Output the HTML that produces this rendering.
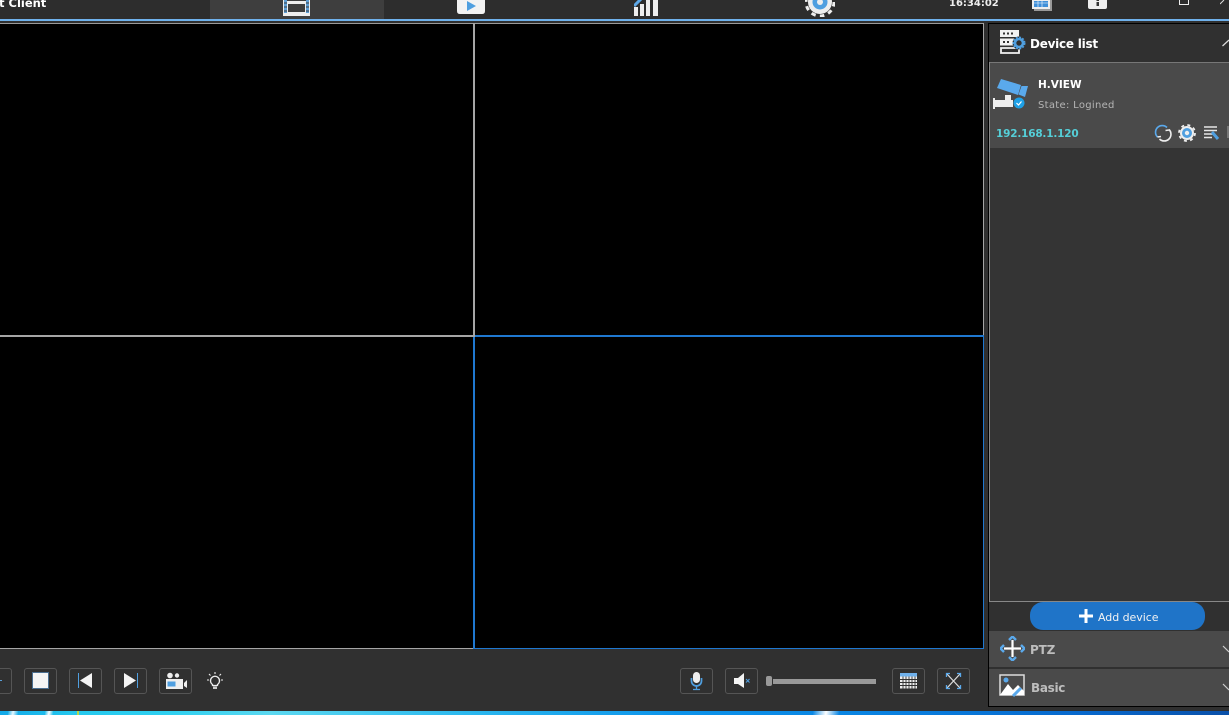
<!DOCTYPE html>
<html><head><meta charset="utf-8">
<style>
html,body{margin:0;padding:0;background:#303030}
#r{position:relative;width:1229px;height:715px;overflow:hidden;background:#303030;font-family:"DejaVu Sans","Liberation Sans",sans-serif}
#r div,#r svg,#r span{position:absolute}
.t{white-space:nowrap;line-height:1}
.b{width:31px;height:24px;top:668px;border:1px solid #555;border-radius:3px}
</style></head><body><div id="r">
<div style="left:0;top:0;width:1229px;height:19px;background:#2d2d2d"></div>
<div style="left:210px;top:0;width:174px;height:19px;background:#3e3e3e"></div>
<div style="left:0;top:19px;width:1229px;height:2px;background:#6fb1ec"></div>
<div class="t" style="left:-1px;top:-4px;font:bold 11.5px 'DejaVu Sans',sans-serif;color:#fff;">t Client</div>
<div class="t" style="left:949px;top:-2px;font:bold 10px 'DejaVu Sans',sans-serif;color:#eee">16:34:02</div>

<svg style="left:283px;top:0" width="27" height="17"><rect x="0" y="0" width="27" height="16" fill="#eee"/><rect x="1" y="0" width="3" height="13" fill="#5d9fd6"/><rect x="23" y="0" width="3" height="13" fill="#5d9fd6"/><path d="M1 3H4M1 7H4M1 11H4M23 3H26M23 7H26M23 11H26" stroke="#3e3e3e" stroke-width="1"/><rect x="4" y="0" width="19" height="1" fill="#3e3e3e"/><rect x="5" y="4" width="17" height="8" fill="#3e3e3e"/></svg>
<svg style="left:457px;top:0" width="28" height="15"><path d="M0 0H28V11Q28 14 25 14H3Q0 14 0 11Z" fill="#f3f3f3"/><path d="M10 1L19 6L10 11Z" fill="#4f9fe0"/></svg>
<svg style="left:634px;top:0" width="26" height="17"><rect x="0" y="7" width="4" height="9" fill="#eee"/><rect x="6" y="4" width="4" height="12" fill="#eee"/><rect x="12" y="0" width="4" height="16" fill="#eee"/><rect x="19" y="0" width="5" height="16" fill="#eee"/><path d="M0 6L8 -2" stroke="#5da8e8" stroke-width="3"/></svg>
<svg style="left:805px;top:0" width="30" height="17"><circle cx="15" cy="2" r="12" fill="#eee"/><circle cx="15" cy="2" r="14" fill="none" stroke="#eee" stroke-width="3" stroke-dasharray="4.500 4.300"/><circle cx="15" cy="2" r="7.500" fill="#4f9fe0"/><circle cx="15" cy="2" r="3" fill="#eee"/></svg>
<svg style="left:1031px;top:0" width="22" height="12"><rect x="3" y="0" width="18" height="11" fill="#999"/><rect x="1" y="0" width="18" height="9" fill="#eee"/><rect x="3" y="1" width="14" height="6" fill="#3f8fd8"/><path d="M7 1V7M11 1V7M3 3H17" stroke="#fff" stroke-width=".6"/></svg>
<svg style="left:1088px;top:0" width="19" height="10"><path d="M0 0H19V7Q19 9 17 9H2Q0 9 0 7Z" fill="#eee"/><rect x="8.500" y="0" width="2.500" height="1" fill="#333"/><rect x="8.500" y="2" width="2.500" height="4" fill="#333"/></svg>
<div style="left:1179px;top:-6px;width:8px;height:9px;border:1px solid #eee"></div>
<svg style="left:1220px;top:0" width="9" height="5"><path d="M0 4L4 0" stroke="#ddd" stroke-width="1"/></svg>

<div style="left:0;top:23px;width:984px;height:626px;background:#000"></div>
<div style="left:0;top:23px;width:984px;height:1px;background:#9a9a9a"></div>
<div style="left:473px;top:23px;width:2px;height:313px;background:#a5a5a5"></div>
<div style="left:0;top:335px;width:475px;height:2px;background:#a5a5a5"></div>
<div style="left:983px;top:23px;width:1px;height:312px;background:#a5a5a5"></div>
<div style="left:0;top:648px;width:473px;height:1px;background:#a5a5a5"></div>
<div style="left:473px;top:337px;width:2px;height:312px;background:#1f78d0"></div>
<div style="left:475px;top:335px;width:509px;height:2px;background:#1f78d0"></div>
<div style="left:983px;top:335px;width:1px;height:314px;background:#1f78d0"></div>
<div style="left:473px;top:648px;width:511px;height:1px;background:#1f78d0"></div>

<div style="left:988px;top:23px;width:241px;height:684px;background:#000"></div>
<div style="left:989px;top:24px;width:240px;height:682px;background:#303030"></div>
<div style="left:989px;top:62px;width:240px;height:1px;background:#777"></div>
<div style="left:989px;top:62px;width:1px;height:540px;background:#888"></div>
<div style="left:990px;top:63px;width:239px;height:85px;background:#4a4a4a"></div>
<div style="left:990px;top:148px;width:239px;height:453px;background:#343434"></div>
<div style="left:989px;top:601px;width:240px;height:1px;background:#888"></div>

<svg style="left:999px;top:29px" width="28" height="26"><rect x="1" y="1" width="19" height="7" fill="#f2f2f2"/><rect x="1" y="9.500" width="19" height="7" fill="#f2f2f2"/><path d="M4 4.500h2M8 4.500h2M12 4.500h2M4 13h2M8 13h2" stroke="#333" stroke-width="2"/><path d="M2 19H20V24H2Z" fill="none" stroke="#f2f2f2" stroke-width="1.800"/><circle cx="20" cy="14" r="6.500" fill="#303030"/><circle cx="20" cy="14" r="4" fill="#303030" stroke="#4f9fe0" stroke-width="2.600"/><circle cx="20" cy="14" r="5.800" fill="none" stroke="#4f9fe0" stroke-width="1.400" stroke-dasharray="2 1.400"/></svg>
<div class="t" style="left:1030px;top:37px;font:bold 12px 'DejaVu Sans',sans-serif;color:#fff;letter-spacing:-.25px">Device list</div>
<svg style="left:1222px;top:38px" width="7" height="10"><path d="M0.500 8L7 2" stroke="#ddd" stroke-width="1.200" fill="none"/></svg>

<svg style="left:992px;top:78px" width="40" height="36"><path d="M5 10L9 1L29 7L26 17Z" fill="#5aa9ec"/><path d="M29.500 8L36 8L33 19L26.500 16.500Z" fill="#5aa9ec"/><rect x="1" y="20" width="2" height="11" fill="#eee"/><rect x="1" y="22" width="20" height="7" fill="#eee"/><rect x="13" y="17" width="6" height="6" fill="#eee"/><circle cx="27" cy="25" r="5.500" fill="#1ea0e6"/><path d="M24.500 25L26.500 27L29.500 23.500" stroke="#fff" stroke-width="1.200" fill="none"/></svg>
<div class="t" style="left:1038px;top:79px;font:bold 10.5px 'DejaVu Sans',sans-serif;color:#fff">H.VIEW</div>
<div class="t" style="left:1038px;top:100px;font:10px 'DejaVu Sans',sans-serif;color:#b5b5b5;letter-spacing:.3px">State: Logined</div>
<div class="t" style="left:996px;top:128px;font:bold 10.5px 'DejaVu Sans',sans-serif;color:#55cfd8;letter-spacing:-.2px">192.168.1.120</div>
<svg style="left:1154px;top:124px" width="18" height="18"><path d="M3.500 13A6.500 6.500 0 0 1 13 3.500" stroke="#5aa9ec" stroke-width="1.600" fill="none"/><path d="M15 5.500A6.500 6.500 0 0 1 5.500 15" stroke="#eee" stroke-width="1.600" fill="none"/><path d="M15 6L11.500 6.500M3.500 13L7 12.500" stroke="#eee" stroke-width="1.500"/></svg>
<svg style="left:1178px;top:124px" width="18" height="18"><circle cx="9" cy="9" r="7" fill="#eee"/><circle cx="9" cy="9" r="8" fill="none" stroke="#eee" stroke-width="1.800" stroke-dasharray="3 3.300"/><circle cx="9" cy="9" r="5" fill="#4f9fe0"/><circle cx="9" cy="9" r="2.200" fill="#eee"/></svg>
<svg style="left:1203px;top:125px" width="18" height="16"><path d="M1 2H14M1 5.500H14M1 9H10M1 12.500H9" stroke="#e6e6e6" stroke-width="1.500"/><path d="M9 7L15 14" stroke="#4f9fe0" stroke-width="3"/></svg>
<div style="left:1227px;top:126px;width:2px;height:12px;background:#777"></div>

<div style="left:1030px;top:602px;width:175px;height:28px;border-radius:13px;background:#1f74c8"></div>
<svg style="left:1079px;top:609px" width="14" height="14"><path d="M7 0V14M0 7H14" stroke="#fff" stroke-width="3"/></svg>
<div class="t" style="left:1098px;top:611px;font:11px 'DejaVu Sans',sans-serif;color:#f2f2f2;letter-spacing:-.05px">Add device</div>

<div style="left:989px;top:631px;width:240px;height:36px;background:#4a4a4a"></div>
<div style="left:989px;top:669px;width:240px;height:37px;background:#4a4a4a"></div>
<svg style="left:1000px;top:636px" width="25" height="25"><path d="M12.500 4V21M4 12.500H21" stroke="#fff" stroke-width="2.200"/><path d="M9 4L12.500 .5L16 4M9 21L12.500 24.500L16 21M4 9L.5 12.500L4 16M21 9L24.500 12.500L21 16" stroke="#5aa9ec" stroke-width="2.400" fill="none"/></svg>
<div class="t" style="left:1030px;top:643px;font:bold 12px 'DejaVu Sans',sans-serif;color:#bdbdbd;letter-spacing:-.2px">PTZ</div>
<svg style="left:999px;top:674px" width="27" height="24"><rect x="1" y="1" width="24" height="20" fill="none" stroke="#ddd" stroke-width="1.500"/><path d="M1 21L9 10L14 16L19 11L25 17V21Z" fill="#fff"/><circle cx="7" cy="6" r="2.500" fill="#5aa9ec"/><path d="M14 22L22 14" stroke="#5aa9ec" stroke-width="3"/></svg>
<div class="t" style="left:1031px;top:681px;font:bold 12px 'DejaVu Sans',sans-serif;color:#bdbdbd;letter-spacing:-.3px">Basic</div>
<svg style="left:1222px;top:644px" width="7" height="10"><path d="M1 2L7 8" stroke="#ccc" stroke-width="1.200"/></svg>
<svg style="left:1222px;top:682px" width="7" height="10"><path d="M1 2L7 8" stroke="#ccc" stroke-width="1.200"/></svg>

<div class="b" style="left:-21px"></div>
<div style="left:0;top:680px;width:2px;height:1px;background:#5a9fd8"></div>
<div class="b" style="left:24px"></div>
<div style="left:32px;top:672px;width:15px;height:15px;background:#f4f4f4;border:1px solid #4a6e90"></div>
<div class="b" style="left:69px"></div>
<svg style="left:69px;top:668px" width="33" height="26"><rect x="9" y="5" width="1" height="15" fill="#4f9fe0"/><path d="M23 5V20L11 12.500Z" fill="#f4f4f4"/></svg>
<div class="b" style="left:114px"></div>
<svg style="left:114px;top:668px" width="33" height="26"><rect x="23" y="5" width="1" height="15" fill="#4f9fe0"/><path d="M10 5V20L22 12.500Z" fill="#f4f4f4"/></svg>
<div class="b" style="left:159px"></div>
<svg style="left:159px;top:668px" width="33" height="26"><circle cx="11" cy="7.500" r="2.800" fill="#eee"/><circle cx="18" cy="7.500" r="2.200" fill="#eee"/><rect x="7" y="11" width="17" height="10" fill="#eee"/><rect x="8.500" y="13.500" width="8" height="5" fill="#4f9fe0"/><path d="M25 15L28 12V20L25 18Z" fill="#eee"/></svg>
<svg style="left:206px;top:672px" width="18" height="18"><path d="M6.500 12.500A4.500 4.500 0 1 1 11.500 12.500V13.500H6.500Z" fill="none" stroke="#eee" stroke-width="1.300"/><rect x="7" y="14.500" width="4" height="2.500" fill="#ccc"/><path d="M9 0V2M3 2L4.500 3.500M15 2L13.500 3.500M1 8H3M15 8H17" stroke="#eee" stroke-width="1.100"/></svg>

<div class="b" style="left:680px"></div>
<svg style="left:680px;top:668px" width="33" height="26"><rect x="13" y="4" width="7" height="11" rx="3.500" fill="#eee"/><path d="M11.500 10V13A5 5 0 0 0 21.500 13V10" stroke="#4f9fe0" stroke-width="1.700" fill="none"/><path d="M16.500 17V21M13 21.500H20" stroke="#4f9fe0" stroke-width="1.300"/></svg>
<div class="b" style="left:725px"></div>
<svg style="left:725px;top:668px" width="33" height="26"><path d="M9 10H13L19 5V20L13 16H9Z" fill="#f4f4f4"/><path d="M21 11L24.500 14.500M24.500 11L21 14.500" stroke="#4f9fe0" stroke-width="1"/></svg>
<div style="left:766px;top:676px;width:6px;height:10px;background:#999;border-radius:2px"></div>
<div style="left:773px;top:679px;width:103px;height:5px;background:#999"></div>
<div class="b" style="left:892px"></div>
<svg style="left:892px;top:668px" width="33" height="26"><rect x="8" y="5" width="17" height="3.500" fill="#6fb1ec"/><rect x="8" y="8.500" width="17" height="12" fill="#eee"/><path d="M8 11.500H25M8 14.500H25M8 17.500H25M11 8.500V21M14 8.500V21M17 8.500V21M20 8.500V21M23 8.500V21" stroke="#333" stroke-width=".9"/></svg>
<div class="b" style="left:937px"></div>
<svg style="left:937px;top:668px" width="33" height="26"><path d="M10 6L23 20M23 6L10 20" stroke="#ddd" stroke-width="1.200"/><path d="M9.500 9V5.500H13M23.500 9V5.500H20M9.500 17V20.500H13M23.500 17V20.500H20" stroke="#5aa9ec" stroke-width="1.300" fill="none"/></svg>

<div style="left:0;top:711px;width:1229px;height:4px;background:linear-gradient(90deg,#12a8e8 0,#25c8ee 6%,#30d0f0 14%,#5cd8f0 22%,#2cb8ee 38%,#0d93ea 55%,#0a84e2 70%,#0868cc 88%,#0a50a8 100%)"></div>
<div style="left:813px;top:711px;width:26px;height:4px;background:linear-gradient(100deg,transparent,#fff 50%,transparent)"></div>
<div style="left:45px;top:711px;width:8px;height:4px;background:linear-gradient(100deg,transparent,#fff 50%,transparent)"></div>
<div style="left:8px;top:711px;width:10px;height:4px;background:linear-gradient(100deg,transparent,#e8f8ff 50%,transparent)"></div>
<div style="left:77px;top:711px;width:2px;height:4px;background:#b8d84a"></div>
</div></body></html>
